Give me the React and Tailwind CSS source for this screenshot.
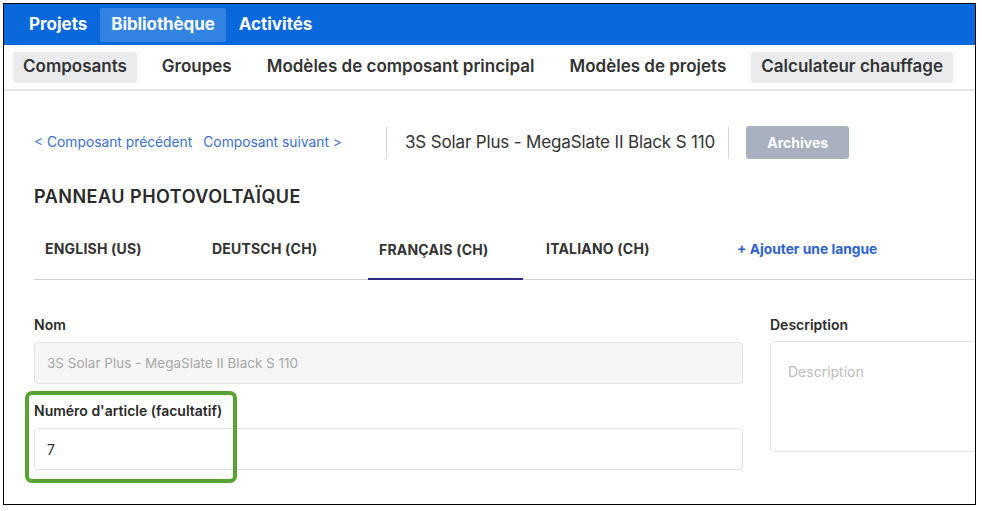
import React from "react";

export default function App() {
  const font = { fontFamily: "Inter, 'Noto Sans', sans-serif" };
  return (
    <div className="w-[982px] h-[511px] bg-white relative" style={font}>
      <div className="absolute left-[3px] top-[3px] w-[973px] h-[502px] border-[1.5px] border-black overflow-hidden bg-white">
        {/* Top nav */}
        <div className="h-[41px] bg-[#0868dc] flex items-center pl-[14px] gap-[2px]">
          <div className="px-[11px] h-[34px] flex items-center text-white font-bold text-[17px]">Projets</div>
          <div className="px-[11px] h-[34px] flex items-center text-white font-bold text-[17px] tracking-[-0.1px] bg-[#3384e2] rounded-[2px]">Bibliothèque</div>
          <div className="px-[11px] h-[34px] flex items-center text-white font-bold text-[17px]">Activités</div>
        </div>
        {/* Sub nav */}
        <div className="h-[46px] flex items-center pl-[9px] gap-[15px] border-b-2 border-[#e6e6e6]">
          <div className="px-[10px] h-[31px] flex items-center bg-[#eaebed] rounded-[3px] text-[17px] font-semibold text-[#333]">Composants</div>
          <div className="px-[10px] h-[31px] flex items-center text-[17px] font-semibold text-[#333]">Groupes</div>
          <div className="px-[10px] h-[31px] flex items-center text-[17px] font-semibold text-[#333]">Modèles de composant principal</div>
          <div className="px-[10px] h-[31px] flex items-center text-[17px] font-semibold text-[#333]">Modèles de projets</div>
          <div className="px-[10px] h-[31px] flex items-center bg-[#eaebed] rounded-[3px] text-[17px] font-semibold text-[#333]">Calculateur chauffage</div>
        </div>
        {/* Content */}
        <div className="pl-[30px]">
          <div className="flex items-center h-[33px] mt-[35px]">
            <div className="text-[13.8px] text-[#3b6fd4] w-[352px] flex gap-[11px]">
              <span>&lt; Composant précédent</span>
              <span>Composant suivant &gt;</span>
            </div>
            <div className="w-px h-[32px] bg-[#d4d4d4]" />
            <div className="pl-[18px] pr-[13px] text-[17px] tracking-[-0.15px] text-[#333]">3S Solar Plus - MegaSlate II Black S 110</div>
            <div className="w-px h-[32px] bg-[#d4d4d4]" />
            <div className="ml-[17px] w-[103px] h-[33px] rounded-[3px] bg-[#a9b0bf] text-white font-bold text-[14px] flex items-center justify-center">Archives</div>
          </div>
          <div className="mt-[24px] text-[18px] tracking-[0.5px] font-semibold text-[#2a2a2a] h-[26px] flex items-center">PANNEAU PHOTOVOLTAÏQUE</div>
          {/* Tabs */}
          <div className="mt-[18px] flex items-end border-b border-[#cfcfcf] h-[53px]">
            {["ENGLISH (US)", "DEUTSCH (CH)", "FRANÇAIS (CH)", "ITALIANO (CH)"].map((t, i) => (
              <div
                key={t}
                className={
                  "w-[155px] mr-[12px] h-[53px] pl-[11px] pt-[12px] text-[14px] tracking-[0.2px] font-bold text-[#333] " +
                  (i === 2 ? "border-b-2 border-[#2d2a86] -mb-px" : "")
                }
              >
                {t}
              </div>
            ))}
            <div className="ml-[35px] h-[53px] pt-[13px] text-[13.8px] font-bold text-[#2b62d0]">+ Ajouter une langue</div>
          </div>
          {/* Form */}
          <div className="flex mt-[35px]">
            <div className="w-[709px] shrink-0">
              <div className="text-[14px] font-semibold text-[#2a2a2a] h-[18px] flex items-center">Nom</div>
              <div className="mt-[9px] h-[42px] rounded-[4px] border border-[#e3e3e3] bg-[#f6f6f6] flex items-center pl-[12px] text-[13.5px] text-[#a8a8a8]">3S Solar Plus - MegaSlate II Black S 110</div>
              <div className="mt-[17px] text-[14px] font-semibold text-[#2a2a2a] h-[18px] flex items-center">Numéro d'article (facultatif)</div>
              <div className="mt-[9px] h-[42px] rounded-[4px] border border-[#e3e3e3] bg-white flex items-center pl-[12px] text-[14px] text-[#333]">7</div>
            </div>
            <div className="ml-[27px] flex-1">
              <div className="text-[14px] font-semibold text-[#2a2a2a] h-[18px] flex items-center">Description</div>
              <div className="mt-[8px] h-[111px] w-[260px] rounded-[4px] border border-[#e3e3e3] bg-white pl-[17px] pt-[19px] text-[14px] text-[#bdbdbd]">Description</div>
            </div>
          </div>
        </div>
        {/* highlight */}
        <div className="absolute left-[21px] top-[387px] w-[212px] h-[92px] border-4 border-[#56a333] rounded-[7px] pointer-events-none" />
      </div>
    </div>
  );
}
